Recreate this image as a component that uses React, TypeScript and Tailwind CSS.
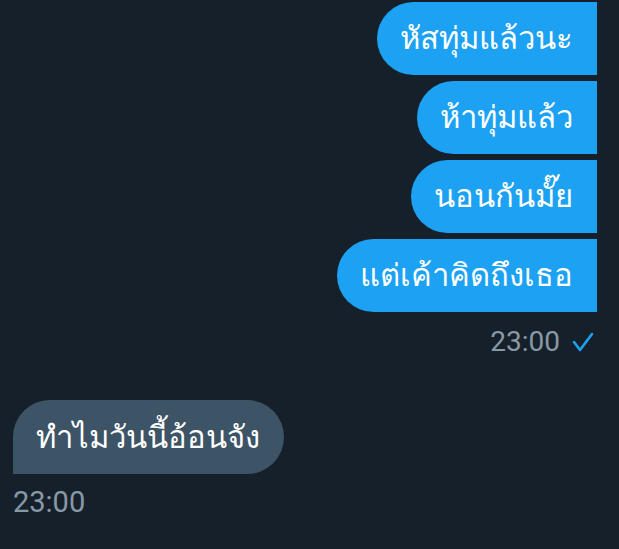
const SENT = ["หัสทุ่มแล้วนะ", "ห้าทุ่มแล้ว", "นอนกันมั๊ย", "แต่เค้าคิดถึงเธอ"]

export default function App() {
  return (
    <div className="h-[549px] w-[619px] overflow-hidden bg-[#16202b] font-['Roboto','Noto_Sans',sans-serif]">
      <div className="flex flex-col items-end gap-[6px] pt-[2px] pr-[22px]">
        {SENT.map((m) => (
          <div
            key={m}
            className="flex h-[73px] items-center rounded-l-[37px] bg-[#1da1f2] pl-[23px] pr-[24px] text-[31px] leading-none text-white"
          >
            {m}
          </div>
        ))}
      </div>
      <div className="mt-[16px] flex h-[28px] items-center justify-end gap-[11px] pr-[24px] text-[28px] leading-none text-[#8899a6]">
        <span>23:00</span>
        <svg width="24" height="22" viewBox="0 0 24 22" fill="none" stroke="#1da1f2" strokeWidth="2.6" strokeLinecap="round" strokeLinejoin="round">
          <path d="M3 11 9 19 21 3" />
        </svg>
      </div>
      <div className="mt-[44px] pl-[13px]">
        <div className="inline-flex h-[74px] items-center rounded-r-[37px] rounded-tl-[37px] bg-[#3d5466] pl-[23px] pr-[24px] text-[31px] leading-none text-white">
          ทำไมวันนี้อ้อนจัง
        </div>
        <div className="mt-[14px] text-[29px] leading-none text-[#8899a6]">23:00</div>
      </div>
    </div>
  )
}
